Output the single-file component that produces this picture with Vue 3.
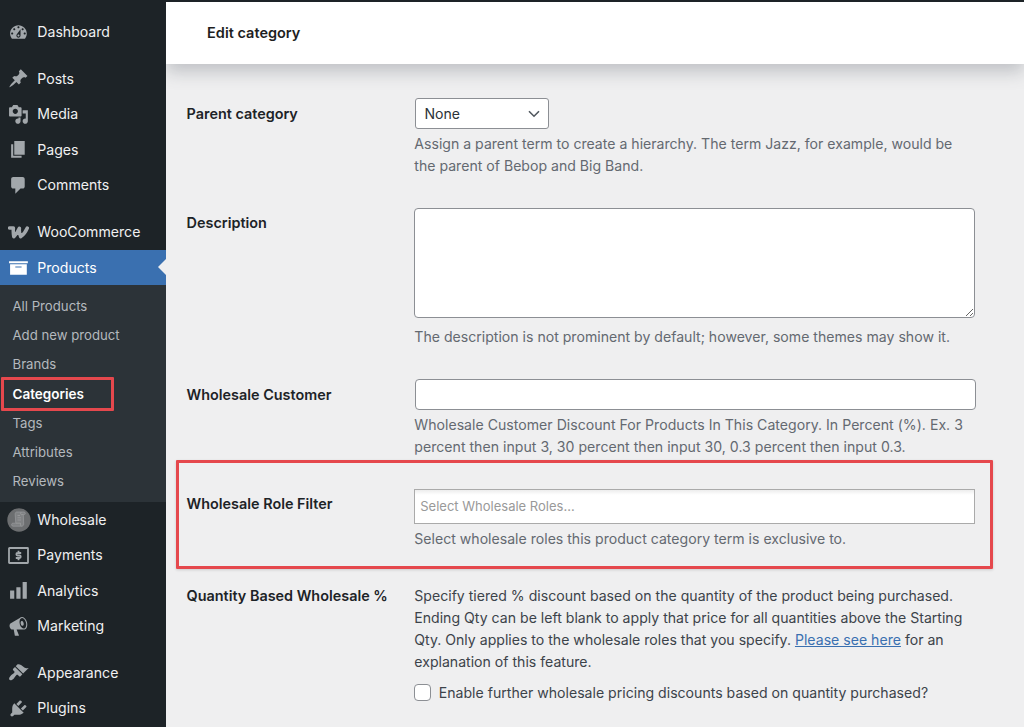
<script setup>
import { ref } from 'vue';

// Sidebar entries, icons are drawn on a 20x20 grid
const menuGroups = [
  [
    {
      name: 'Dashboard',
      icon: 'M3.76 16h12.48c1.1-1.37 1.76-3.11 1.76-5 0-4.42-3.58-8-8-8s-8 3.58-8 8c0 1.89.66 3.63 1.76 5zM10 4c.55 0 1 .45 1 1s-.45 1-1 1-1-.45-1-1 .45-1 1-1zM6 6c.55 0 1 .45 1 1s-.45 1-1 1-1-.45-1-1 .45-1 1-1zm8 0c.55 0 1 .45 1 1s-.45 1-1 1-1-.45-1-1 .45-1 1-1zm-5.37 5.55L12 7v6c0 1.1-.9 2-2 2s-2-.9-2-2c0-.57.24-1.08.63-1.45zM4 10c.55 0 1 .45 1 1s-.45 1-1 1-1-.45-1-1 .45-1 1-1zm12 0c.55 0 1 .45 1 1s-.45 1-1 1-1-.45-1-1 .45-1 1-1zm-5 3c0-.55-.45-1-1-1s-1 .45-1 1 .45 1 1 1 1-.45 1-1z',
    },
  ],
  [
    {
      name: 'Posts',
      icon: 'M10.44 3.02l1.82-1.82 6.36 6.35-1.83 1.82c-1.05-.68-2.48-.57-3.41.36l-.75.75c-.92.93-1.04 2.35-.35 3.41l-1.83 1.82-2.41-2.41-2.8 2.79c-.42.42-3.38 2.71-3.8 2.29s1.86-3.39 2.28-3.81l2.79-2.79L4.1 9.36l1.83-1.82c1.05.69 2.48.57 3.4-.36l.75-.75c.93-.92 1.05-2.35.36-3.41z',
    },
    {
      name: 'Media',
      icon: 'M13 11V4c0-.55-.45-1-1-1h-1.67L9 1H5L3.67 3H2c-.55 0-1 .45-1 1v7c0 .55.45 1 1 1h10c.55 0 1-.45 1-1zM7 4.5c1.38 0 2.5 1.12 2.5 2.5S8.38 9.5 7 9.5 4.5 8.38 4.5 7 5.62 4.5 7 4.5zM14 6h5v10.5c0 1.38-1.12 2.5-2.5 2.5S14 17.88 14 16.5s1.12-2.5 2.5-2.5c.17 0 .34.02.5.05V9h-3V6zm-4 8.05V13h2v3.5c0 1.38-1.12 2.5-2.5 2.5S7 17.88 7 16.5 8.12 14 9.5 14c.17 0 .34.02.5.05z',
    },
    { name: 'Pages', icon: 'M6 15V2h10v13H6zm-1 1h8v2H3V5h2v11z' },
    {
      name: 'Comments',
      icon: 'M5 2h9c1.1 0 2 .9 2 2v7c0 1.1-.9 2-2 2h-2l-5 5v-5H5c-1.1 0-2-.9-2-2V4c0-1.1.9-2 2-2z',
    },
  ],
  [
    { name: 'WooCommerce', type: 'woo' },
    {
      name: 'Products',
      icon: 'M19 4v2H1V4h18zM2 7h16v10H2V7zm11 3V9H7v1h6z',
      active: true,
      children: ['All Products', 'Add new product', 'Brands', 'Categories', 'Tags', 'Attributes', 'Reviews'],
    },
    { name: 'Wholesale', type: 'wholesale' },
    { name: 'Payments', type: 'payments' },
    { name: 'Analytics', icon: 'M18 18V2h-4v16h4zm-6 0V7H8v11h4zm-6 0v-8H2v8h4z' },
    {
      name: 'Marketing',
      icon: 'M18.15 5.94c.46 1.62.38 3.22-.02 4.48-.42 1.28-1.26 2.18-2.3 2.48-.16.06-.26.06-.4.06-.06.02-.12.02-.18.02-.06.02-.14.02-.22.02h-6.8l2.22 5.5c.02.14-.06.26-.14.34-.08.1-.24.16-.34.16H6.95c-.1 0-.26-.06-.34-.16-.08-.08-.16-.2-.14-.34l-1-5.5H4.25l-.02-.02c-.5.06-1.08-.18-1.54-.62s-.88-1.08-1.06-1.88c-.24-.8-.2-1.56-.02-2.2.18-.62.58-1.08 1.06-1.3l.02-.02 9-5.4c.1-.06.18-.1.24-.16.06-.04.14-.08.24-.12.16-.08.28-.12.5-.18 1.04-.3 2.24.1 3.22.98s1.84 2.24 2.26 3.86zm-2.58 5.98h-.02c.4-.1.74-.34 1.04-.7.58-.7.86-1.76.86-3.04 0-.64-.1-1.3-.28-1.98-.34-1.36-1.02-2.5-1.78-3.24s-1.68-1.1-2.46-.88c-.82.22-1.4.96-1.7 2-.32 1.04-.28 2.36.06 3.72.38 1.36 1 2.5 1.8 3.24.78.74 1.62 1.1 2.48.88zm-2.54-7.08c.22-.04.42-.02.62.04.38.16.76.48 1.02 1s.42 1.2.42 1.78c0 .3-.04.56-.12.8-.18.48-.44.84-.86.94-.34.1-.8-.06-1.14-.4s-.64-.86-.78-1.5c-.18-.62-.12-1.24.02-1.72s.48-.84.82-.94z',
    },
  ],
  [
    {
      name: 'Appearance',
      icon: 'M14.48 11.06L7.41 3.99l1.5-1.5c.5-.56 2.3-.47 3.51.32 1.21.8 1.43 1.28 2.91 2.1 1.18.64 2.45 1.26 4.45.85zm-.71.71L6.7 4.7 4.93 6.47c-.39.39-.39 1.02 0 1.41l1.06 1.06c.39.39.39 1.03 0 1.42-.6.6-1.43 1.11-2.21 1.69-.35.26-.7.53-1.01.84C1.43 14.23.4 16.08 1.4 17.07c.99 1 2.84-.03 4.18-1.36.31-.31.58-.66.85-1.02.57-.78 1.08-1.61 1.69-2.21.39-.39 1.02-.39 1.41 0l1.06 1.06c.39.39 1.02.39 1.41 0z',
    },
    {
      name: 'Plugins',
      icon: 'M13.11 4.36L9.87 7.6 8 5.73l3.24-3.24c.35-.34 1.05-.2 1.56.32.52.51.66 1.21.31 1.55zm-8 1.77l.91-1.12 9.01 9.01-1.19.84c-.71.71-2.63 1.16-3.82 1.16H6.14L4.9 17.26c-.59.59-1.54.59-2.12 0-.59-.58-.59-1.53 0-2.12l1.24-1.24v-3.88c0-1.13.4-3.19 1.09-3.89zm7.26 3.97l3.24-3.24c.34-.35 1.04-.21 1.55.31.52.51.66 1.21.31 1.55l-3.24 3.25z',
    },
  ],
];

const currentPage = ref('Categories');

// Form state
const description = ref('');
const discount = ref('');
const roles = ref('');
const quantityBased = ref(false);
</script>

<template>
  <div class="admin">
    <nav class="sidebar">
      <ul v-for="(group, i) in menuGroups" :key="i" class="menu-group">
        <li v-for="item in group" :key="item.name">
          <a class="menu-item" :class="{ active: item.active }">
            <span class="icon">
              <svg v-if="item.type === 'woo'" class="woo" viewBox="0 0 21 13">
                <path d="M1.5 2h3.9c-.3 3-.1 6 .4 8.7 2.2-2.2 4.2-5.2 5.6-8.4-.3 3 .1 6 1.3 8.4 2.8-2 5-5 6.600-8.700" />
              </svg>
              <svg v-else-if="item.type === 'wholesale'" class="wholesale" viewBox="0 0 24 24">
                <circle cx="12" cy="12" r="11.7" />
                <path class="paper" d="M9.5 4h7.5c1.5 0 1.8 2.4.3 2.6h-1l.4 9.4c0 1.3-.8 2.2-2 2.2H6c-1.7 0-1.9-3-.2-3h3l-.6-9c0-1.2.4-2 1.3-2.2z" />
                <path class="lines" d="M16.3 6.6h-2c-.9-.2-.8-2 0-2.5M8.8 15.2h4.7c-.3 1.2 0 2.5.9 3M10.5 7.5h2.5M10.5 9.8h3.5M10.5 12h3.5" />
              </svg>
              <svg v-else-if="item.type === 'payments'" class="payments" viewBox="0 0 21 17">
                <rect x="1" y="1" width="19" height="15" rx="0.5" />
                <path d="M13.2 6H9.6a1.25 1.25 0 0 0 0 2.5h1.9a1.25 1.25 0 0 1 0 2.5H7.8M10.5 3.8v2M10.5 11v2.2" />
              </svg>
              <svg v-else class="dashicon" viewBox="0 0 20 20"><path :d="item.icon" /></svg>
            </span>
            {{ item.name }}
          </a>
          <ul v-if="item.children" class="submenu">
            <li v-for="child in item.children" :key="child" :class="{ current: child === currentPage }">
              <a>{{ child }}</a>
            </li>
          </ul>
        </li>
      </ul>
    </nav>

    <main class="content">
      <header class="page-header">
        <h1>Edit category</h1>
      </header>

      <form class="form-table">
        <div class="row">
          <label>Parent category</label>
          <div class="field">
            <div class="select">
              <span>None</span>
              <svg viewBox="0 0 12 8"><path d="M1 1.2l5 5 5-5" /></svg>
            </div>
            <p class="help">
              Assign a parent term to create a hierarchy. The term Jazz, for example, would be<br />
              the parent of Bebop and Big Band.
            </p>
          </div>
        </div>

        <div class="row">
          <label>Description</label>
          <div class="field">
            <textarea v-model="description"></textarea>
            <p class="help after-textarea">
              The description is not prominent by default; however, some themes may show it.
            </p>
          </div>
        </div>

        <div class="row">
          <label>Wholesale Customer</label>
          <div class="field">
            <input v-model="discount" class="text-input" type="text" />
            <p class="help discount-help">
              Wholesale Customer Discount For Products In This Category. In Percent (%). Ex. 3<br />
              percent then input 3, 30 percent then input 30, 0.3 percent then input 0.3.
            </p>
          </div>
        </div>

        <div class="row highlighted">
          <label>Wholesale Role Filter</label>
          <div class="field">
            <input v-model="roles" class="roles-input" type="text" placeholder="Select Wholesale Roles..." />
            <p class="help">Select wholesale roles this product category term is exclusive to.</p>
          </div>
        </div>

        <div class="row quantity">
          <label>Quantity Based Wholesale %</label>
          <div class="field">
            <p>
              Specify tiered % discount based on the quantity of the product being purchased.<br />
              Ending Qty can be left blank to apply that price for all quantities above the Starting<br />
              Qty. Only applies to the wholesale roles that you specify. <a class="link">Please see here</a> for an<br />
              explanation of this feature.
            </p>
            <div class="check">
              <input v-model="quantityBased" type="checkbox" />
              <span>Enable further wholesale pricing discounts based on quantity purchased?</span>
            </div>
          </div>
        </div>
      </form>
    </main>
  </div>
</template>

<style>
body {
  background: #efeff0;
  overflow: hidden;
}
</style>

<style scoped>
.admin {
  display: flex;
  height: 727px;
  box-sizing: border-box;
  border-top: 2px solid #1d2327;
  overflow: hidden;
  background: #efeff0;
  color: #3c434a;
  font-family: Inter, "Liberation Sans", sans-serif;
  font-size: 14.1px;
  line-height: 21.9px;
}
ul {
  list-style: none;
  margin: 0;
  padding: 0;
}

/* Sidebar */
.sidebar {
  flex: none;
  width: 165.6px;
  padding-top: 12.5px;
  background: #1d2327;
}
.menu-group {
  margin-bottom: 11.2px;
}
.menu-item {
  position: relative;
  display: flex;
  align-items: center;
  height: 35.5px;
  color: #f0f0f1;
  white-space: nowrap;
}
.menu-item.active {
  background: #3a70b0;
  color: #fff;
}
.menu-item.active::after {
  content: "";
  position: absolute;
  right: 0;
  top: 9.4px;
  border: 8.4px solid transparent;
  border-left: 0;
  border-right-color: #efeff0;
}
.icon {
  display: flex;
  justify-content: center;
  width: 37.3px;
  color: #a2a7ab;
}
.active .icon {
  color: #fff;
}
.dashicon {
  width: 20.9px;
  height: 20.9px;
  fill: currentColor;
}
.woo {
  width: 21px;
  height: 13px;
  fill: none;
  stroke: currentColor;
  stroke-width: 3.5;
  stroke-linejoin: round;
  stroke-linecap: round;
}
.wholesale {
  width: 24px;
  height: 24px;
  fill: #6c6e70;
}
.wholesale .paper {
  fill: #808284;
  stroke: #999b9d;
  stroke-width: 0.7;
}
.wholesale .lines {
  fill: none;
  stroke: #a0a2a4;
  stroke-width: 0.7;
}
.payments {
  width: 21px;
  height: 17px;
  fill: none;
  stroke: currentColor;
  stroke-width: 1.8;
}
.submenu {
  padding: 7px 0 5.3px;
  background: #2c3338;
  font-size: 13.2px;
}
.submenu li {
  position: relative;
  display: flex;
  align-items: center;
  height: 29.2px;
  padding-left: 12.5px;
  color: #b4b9be;
}
.submenu .current {
  color: #fff;
  font-size: 13.5px;
  font-weight: 600;
}
.submenu .current::after {
  content: "";
  position: absolute;
  left: 1px;
  top: -3px;
  width: 107px;
  height: 28px;
  border: 3px solid #e5484d;
  border-radius: 1px;
}

/* Content */
.content {
  flex: 1;
  min-width: 0;
}
.page-header {
  display: flex;
  align-items: center;
  height: 62px;
  padding-left: 41.5px;
  background: #fff;
  box-shadow: 0 8px 16px 0 rgba(85, 93, 102, 0.3);
  /* keep the shadow off the sidebar */
  clip-path: inset(0 0 -40px 0);
}
h1 {
  margin: 0;
  color: #1e1e1e;
  font-size: 14.5px;
  font-weight: 600;
}
.form-table {
  padding: 34px 0 0 21px;
}
.row {
  position: relative;
  display: flex;
  padding-bottom: 30.7px;
}
.row > label {
  width: 227.7px;
  padding-top: 4.9px;
  color: #1d2327;
  font-size: 14.4px;
  font-weight: 600;
}
.field {
  width: 561px;
  white-space: nowrap;
}
p {
  margin: 0;
}
.help {
  margin-top: 4px;
  color: #646970;
}
.help.after-textarea {
  margin-top: 8.6px;
  margin-bottom: 0.4px;
}
.discount-help {
  letter-spacing: 0.015px;
}
.select {
  display: flex;
  align-items: center;
  justify-content: space-between;
  box-sizing: border-box;
  width: 134px;
  height: 31px;
  margin-left: 0.5px;
  padding: 0 8px 0 8.6px;
  background: #fff;
  border: 1px solid #8c8f94;
  border-radius: 3px;
  color: #2c3338;
}
.select svg {
  width: 12px;
  height: 8px;
  fill: none;
  stroke: #50575e;
  stroke-width: 1.6;
}
textarea,
.text-input,
.roles-input {
  display: block;
  box-sizing: border-box;
  width: 561px;
  margin: 0;
  background: #fff;
  border: 1px solid #8c8f94;
  border-radius: 4px;
  font: inherit;
}
textarea {
  height: 110px;
}
.text-input {
  height: 31px;
  margin-left: 0.5px;
}
.roles-input {
  height: 35px;
  padding: 0 5px;
  border-color: #aaa;
  border-radius: 0;
  background: linear-gradient(#eee 1%, #fff 15%);
  font-size: 13px;
}
.roles-input::placeholder {
  color: #999;
}
.highlighted {
  padding-bottom: 35.6px;
}
.highlighted::after {
  content: "";
  position: absolute;
  left: -11px;
  top: -28.3px;
  width: 811px;
  height: 103px;
  border: 3px solid #e5484d;
  border-radius: 1px;
  box-shadow: 0 1px 3px rgba(0, 0, 0, 0.15);
}
.row.quantity > label {
  padding-top: 0.4px;
}
.link {
  color: #3a70b0;
  text-decoration: underline;
}
.check {
  display: flex;
  align-items: center;
  margin-top: 9px;
}
.check input {
  appearance: none;
  box-sizing: border-box;
  width: 17px;
  height: 17px;
  margin: -1px 7.5px 0 0;
  background: #fff;
  border: 1px solid #8c8f94;
  border-radius: 4px;
}
</style>
